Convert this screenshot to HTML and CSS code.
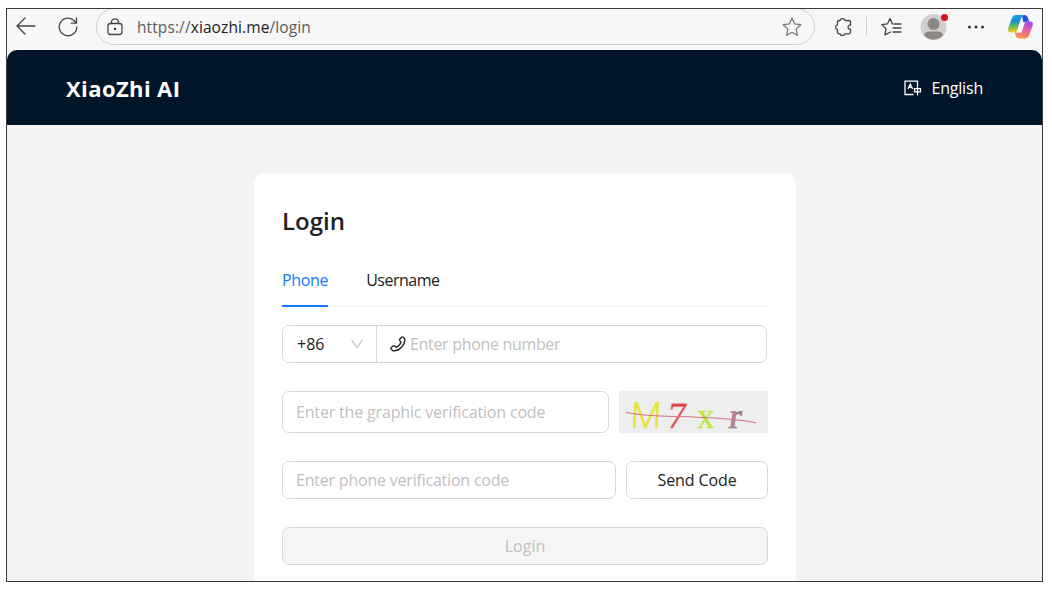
FILE: index.html
```html
<!DOCTYPE html>
<html lang="en">
<head>
<meta charset="utf-8">
<title>XiaoZhi AI</title>
<link rel="stylesheet" href="styles.css">
</head>
<body>
<div class="window">
  <div class="toolbar">
    <svg class="ico back" width="20" height="18" viewBox="0 0 20 18"><path d="M19 9H1M9 1L1 9l8 8"/></svg>
    <svg class="ico reload" width="20" height="20" viewBox="0 0 20 20"><path d="M18.800 10A8.800 8.800 0 1 1 16.500 4L18.300 6M18.500 1v5.200h-5.200"/></svg>
    <div class="address">
      <svg class="ico lock" width="16" height="18" viewBox="0 0 16 18"><rect x="1" y="5.500" width="14" height="11" rx="2.500"/><path d="M4.500 5.500V4.300a3.500 3.500 0 0 1 7 0V5.500"/><circle class="dot" cx="8" cy="11" r="1.200"/></svg>
      <span class="url"><span class="dim">https://</span>xiaozhi.me<span class="dim">/login</span></span>
      <svg class="ico star" width="20" height="20" viewBox="0 0 20 20"><path d="M10 1.300l2.600 5.600 6 .8-4.400 4.200 1.100 6.300-5.300-3-5.300 3 1.100-6.300L1.400 7.700l6-.8z"/></svg>
    </div>
    <svg class="ico puzzle" width="18" height="20" viewBox="0 0 18 20"><path d="M6 3.500A2.600 2.600 0 0 1 11 3.500H15Q16.500 3.500 16.500 5V8.200H15.500A2.100 2.100 0 0 0 15.500 12.200H16.500V15Q16.500 16.800 15 16.800H11A2.600 2.600 0 0 1 6 16.800H5Q3.500 16.800 3.500 15V12.500A2.400 2.400 0 0 1 3.500 7.800V5Q3.500 3.500 5 3.500Z"/></svg>
    <span class="divider"></span>
    <svg class="ico favs" width="21" height="20" viewBox="0 0 21 20"><path d="M11.500 7L9 1.500 6.500 6.800.800 7.600 5 11.800 4 17.800 9.500 15M9 1.500L11.500 7M13 7h7M12 11h8M12 15h8"/></svg>
    <span class="avatar">
      <svg width="28" height="28" viewBox="0 0 28 28"><circle cx="13.500" cy="14" r="13" fill="#d2d0ce"/><circle cx="13.500" cy="11" r="6" fill="#8c8886"/><path d="M4 22.500Q5 18.500 9 18.500H18Q22 18.500 23 22.500A13 13 0 0 1 4 22.500Z" fill="#8c8886"/></svg>
      <i class="badge"></i>
    </span>
    <svg class="more" width="18" height="6" viewBox="0 0 18 6"><circle cx="2.500" cy="3" r="1.500"/><circle cx="9" cy="3" r="1.500"/><circle cx="15.500" cy="3" r="1.500"/></svg>
    <svg class="copilot" width="28" height="26" viewBox="0 0 28 26">
      <defs>
        <linearGradient id="ca" x1="0" y1="0" x2="0" y2="1"><stop offset="0" stop-color="#18a5e8"/><stop offset=".35" stop-color="#168fd0"/><stop offset=".65" stop-color="#6bb95c"/><stop offset="1" stop-color="#fcc711"/></linearGradient>
        <linearGradient id="cb" x1=".6" y1="0" x2=".3" y2="1"><stop offset="0" stop-color="#a44bea"/><stop offset=".5" stop-color="#ef6390"/><stop offset="1" stop-color="#ff9a4a"/></linearGradient>
      </defs>
      <path d="M7.500 18.500l1.500 4Q10 24.500 12 24.500h6q3 0 4-3l3.500-9.500Q27 7.500 23.500 7.500h-3q-2.500 0-3.200 2.500l-2.800 8.500z" fill="url(#cb)"/>
      <path d="M15 1h2.500Q20 1 20.800 3.500L22 7.500h-2q-2.500 0-3.500 2.500z" fill="#1d56cf"/>
      <path d="M9 1h8q-2 .5-3 3.500l-4 12q-.8 2-3 2H4Q0 18.500 1.500 13L5 4q1-3 4-3z" fill="url(#ca)"/>
      <path d="M13.500 8h4.500q-.8.800-1.200 2.200l-2.600 8.300H9.500q.8-.8 1.200-2z" fill="#fff"/>
    </svg>
  </div>
  <div class="page">
    <header class="site-header">
      <span class="brand">XiaoZhi AI</span>
      <span class="lang">
        <svg width="18" height="16" viewBox="0 0 18 16"><path d="M9.500 14.500H1V1.200H13.500V6.500M4 9L6.300 4 8.600 9M4.800 7.300H7.800M10.500 8.700H16.500V11.800H10.500ZM13.500 6.800V15.500"/></svg>
        <span class="lang-name">English</span>
      </span>
    </header>
    <main class="card">
      <h1 class="title">Login</h1>
      <nav class="tabs"><span class="tab active">Phone</span><span class="tab">Username</span></nav>
      <div class="row phone">
        <div class="prefix"><span>+86</span><svg width="12" height="10" viewBox="0 0 12 10"><path d="M.700 1L6 8.500 11.300 1"/></svg></div>
        <div class="number"><svg width="16" height="16" viewBox="0 0 16 16"><path d="M9.800 3L11.600 1.200Q12.400.500 13.200 1.300L14.600 2.700Q15.600 7 11.500 11.200 7.500 15.300 3 14.800L1.200 13.200Q.500 12.400 1.200 11.700L3 10Q3.800 9.300 4.600 10L6 11.300Q9.800 9.800 11 6.300L9.800 4.600Q9.100 3.700 9.800 3Z"/></svg><span class="ph-number">Enter phone number</span></div>
      </div>
      <div class="row graphic">
        <div class="field"><span class="ph-graphic">Enter the graphic verification code</span></div>
        <svg class="captcha" width="149" height="42" viewBox="0 0 149 42">
          <g class="captcha-text">
            <text class="glyph-m" transform="translate(11 37) skewX(-3)">M</text>
            <text class="glyph-7" transform="translate(47 37) skewX(-8)">7</text>
            <text class="glyph-x" transform="translate(78 37)">x</text>
            <text class="glyph-r" transform="translate(109 37) skewX(-8)">r</text>
          </g>
          <path d="M7 21.500Q25 25 55 25.500T108 28 137 32" fill="none" stroke="#d9708c" stroke-width="1.200"/>
        </svg>
      </div>
      <div class="row code">
        <div class="field"><span class="ph-code">Enter phone verification code</span></div>
        <button class="send"><span class="send-label">Send Code</span></button>
      </div>
      <button class="submit" disabled><span class="submit-label">Login</span></button>
    </main>
  </div>
</div>
</body>
</html>
```
FILE: styles.css
```css
* { box-sizing: border-box; }
body { margin: 0; padding: 8px 0 0 6px; background: #fff; font: 16px "Open Sans", "Noto Sans", sans-serif; color: #222; }
.window { width: 1037px; height: 574px; border: 1px solid #3b3b3d; background: #f7f7f7; overflow: hidden; }
.toolbar { height: 41px; display: flex; align-items: flex-start; padding-left: 9px; }
.toolbar > svg, .divider, .avatar { flex: none; }
.ico { fill: none; stroke: #454545; stroke-width: 1.3; stroke-linejoin: round; stroke-linecap: round; }
.back { margin-top: 8px; }
.reload { margin: 8px 0 0 22px; }
.address { flex: none; width: 719px; height: 37px; margin: -1px 0 0 18px; border: 1px solid #cfcfcf; border-radius: 19px; display: flex; align-items: center; padding: 0 12px 0 10px; }
.lock .dot { fill: #333; stroke: none; }
.url { margin-left: 14px; font-size: 15.5px; letter-spacing: .1px; flex: 1; }
.dim { color: #5c5c5c; }
.star { stroke: #777; }
.puzzle { margin: 8px 0 0 19px; }
.divider { width: 1px; height: 19px; background: #cfcfcf; margin: 8px 0 0 14px; }
.favs { margin: 8px 0 0 14px; }
.avatar { position: relative; height: 28px; margin: 4px 0 0 18px; }
.badge { position: absolute; width: 7px; height: 7px; right: 0; top: 1px; border-radius: 50%; background: #e00b1c; }
.more { margin: 15px 0 0 19px; fill: #333; }
.copilot { margin: 5px 0 0 22px; }
.page { height: 531px; display: flex; flex-direction: column; background: #f4f4f4; border-radius: 10px 10px 0 0; overflow: hidden; }
.site-header { flex: none; height: 75px; background: #001529; color: #fff; display: flex; justify-content: space-between; align-items: center; padding: 0 59px; }
.brand { font-size: 22px; font-weight: 700; letter-spacing: .4px; }
.lang { display: flex; align-items: center; gap: 9px; }
.lang-name { letter-spacing: -.2px; }
.lang svg { fill: none; stroke: #fff; stroke-width: 1.3; }
.card { flex: none; width: 542px; height: 430px; margin: 48px 0 0 247px; padding: 30px 28px 0; background: #fff; border-radius: 10px; }
.title { margin: 0; font-size: 24px; line-height: 36px; font-weight: 600; }
.tabs { height: 47px; margin-top: 21px; display: flex; gap: 38px; border-bottom: 1px solid #f0f0f0; }
.tab { height: 47px; line-height: 41px; letter-spacing: -.5px; }
.active { letter-spacing: -.35px; color: #1677ff; border-bottom: 2px solid #1677ff; }
.row { display: flex; gap: 10px; }
.phone { height: 38px; width: 485px; margin-top: 18px; border: 1px solid #d9d9d9; border-radius: 7px; gap: 0; }
.prefix { width: 94px; border-right: 1px solid #d9d9d9; display: flex; align-items: center; justify-content: space-between; padding: 0 13px 0 14px; }
.prefix svg { fill: none; stroke: #bcbcbc; stroke-width: 1.2; }
.number { display: flex; align-items: center; gap: 4px; padding-left: 13px; color: #bfbfbf; }
.number svg { fill: none; stroke: #222; stroke-width: 1.3; }
.ph-number { letter-spacing: -.32px; }
.ph-graphic { letter-spacing: -.17px; }
.ph-code { letter-spacing: -.21px; }
.graphic { margin-top: 28px; height: 42px; }
.field { flex: 1; border: 1px solid #d9d9d9; border-radius: 7px; display: flex; align-items: center; padding-left: 13px; color: #bfbfbf; }
.captcha { background: #eee; overflow: visible; }
.captcha-text { font-family: "Liberation Serif", serif; stroke-width: .7; }
.glyph-m { font: 300 36px "Open Sans", sans-serif; fill: #e8e337; stroke: #e8e337; }
.glyph-7 { font-size: 37px; fill: #dc3636; stroke: #e48787; }
.glyph-x { font-size: 35px; fill: #b4e52a; stroke: #cdea7d; }
.glyph-r { font-size: 36px; fill: #b58c9a; stroke: #9c6b7b; }
.code { margin-top: 28px; height: 38px; }
.send { width: 142px; border: 1px solid #d9d9d9; border-radius: 7px; background: #fff; font: inherit; color: #222; padding: 0; }
.send-label { letter-spacing: -.1px; }
.submit { width: 100%; height: 38px; margin-top: 28px; border: 1px solid #d9d9d9; border-radius: 7px; background: #f5f5f5; font: inherit; color: #bfbfbf; padding: 0; }
```
